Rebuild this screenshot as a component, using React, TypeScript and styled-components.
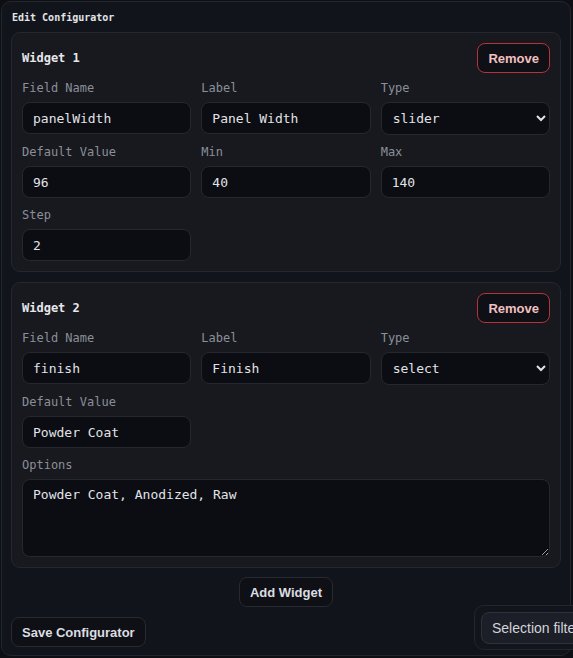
import styled, { createGlobalStyle } from 'styled-components'

const Global = createGlobalStyle`
  html, body {
    margin: 0;
    padding: 0;
    background: #0d0f14;
    color-scheme: dark;
  }
  * {
    box-sizing: border-box;
  }
`

const mono = `"DejaVu Sans Mono", "Liberation Mono", monospace`
const sans = `"Liberation Sans", Arial, sans-serif`

const Page = styled.div`
  position: relative;
  width: 573px;
  height: 658px;
  padding: 1px 2px 2px 1px;
  overflow: hidden;
`

const Panel = styled.div`
  height: 100%;
  background: #12141b;
  border: 1px solid #23262d;
  border-radius: 10px;
  padding: 9px 9px 0 9px;
  display: flex;
  flex-direction: column;
`

const Title = styled.h1`
  margin: 0 0 7px 1px;
  font-family: ${mono};
  font-size: 10px;
  line-height: 14px;
  font-weight: bold;
  color: #e2e4e8;
`

const Cards = styled.div`
  display: flex;
  flex-direction: column;
  gap: 10px;
`

const Card = styled.section`
  background: #18191f;
  border: 1px solid #25272e;
  border-radius: 9px;
  padding: 10px 10px 10px 10px;
`

const CardHeader = styled.div`
  display: flex;
  align-items: center;
  justify-content: space-between;
  margin-bottom: 8px;
`

const CardTitle = styled.h2`
  margin: 0;
  font-family: ${mono};
  font-size: 12px;
  font-weight: bold;
  color: #e6e7ea;
`

const Button = styled.button<{ $danger?: boolean }>`
  font-family: ${sans};
  font-size: 13px;
  font-weight: bold;
  height: 30px;
  padding: 0 10px;
  border-radius: 8px;
  background: #0e1016;
  color: ${(p) => (p.$danger ? '#f2c0c0' : '#dcdde0')};
  border: 1px solid ${(p) => (p.$danger ? '#b8323a' : '#272a31')};
  cursor: pointer;
`

const Grid = styled.div`
  display: grid;
  grid-template-columns: repeat(3, 1fr);
  column-gap: 10px;
  row-gap: 10px;
`

const Field = styled.label<{ $full?: boolean }>`
  display: flex;
  flex-direction: column;
  gap: 6px;
  grid-column: ${(p) => (p.$full ? '1 / -1' : 'auto')};
`

const FieldLabel = styled.span`
  font-family: ${mono};
  font-size: 12px;
  line-height: 15px;
  color: #8a8f98;
`

const inputBase = `
  width: 100%;
  background: #0b0d13;
  border: 1px solid #262830;
  border-radius: 8px;
  color: #e2e3e6;
  font-family: ${mono};
  font-size: 13px;
  outline: none;
`

const Input = styled.input`
  ${inputBase}
  height: 32px;
  padding: 0 10px;
`

const Select = styled.select`
  ${inputBase}
  height: 33px;
  padding: 0 7px;
`

const TextArea = styled.textarea`
  ${inputBase}
  height: 78px;
  padding: 6px 10px;
  line-height: 17px;
  resize: vertical;
`

const Footer = styled.div`
  display: flex;
  flex-direction: column;
  margin-top: 9px;
  gap: 10px;
`

const Center = styled.div`
  display: flex;
  justify-content: center;
`

const Start = styled.div`
  display: flex;
  justify-content: flex-start;
`

const FilterPopover = styled.div`
  position: absolute;
  left: 474px;
  top: 605px;
  width: 140px;
  height: 45px;
  background: #13151c;
  border: 1px solid #23262d;
  border-radius: 10px;
  padding: 6px;
`

const FilterButton = styled.button`
  height: 32px;
  width: 120px;
  text-align: left;
  padding: 0 10px;
  white-space: nowrap;
  font-family: ${sans};
  font-size: 14px;
  color: #d2d4d8;
  background: #1c1f27;
  border: 1px solid #2e313a;
  border-radius: 8px;
`

type Widget = {
  name: string
  label: string
  type: string
  defaultValue: string
  min?: string
  max?: string
  step?: string
  options?: string
}

const widgets: Widget[] = [
  {
    name: 'panelWidth',
    label: 'Panel Width',
    type: 'slider',
    defaultValue: '96',
    min: '40',
    max: '140',
    step: '2'
  },
  {
    name: 'finish',
    label: 'Finish',
    type: 'select',
    defaultValue: 'Powder Coat',
    options: 'Powder Coat, Anodized, Raw'
  }
]

function WidgetCard({ widget, index }: { widget: Widget; index: number }) {
  return (
    <Card>
      <CardHeader>
        <CardTitle>Widget {index + 1}</CardTitle>
        <Button $danger>Remove</Button>
      </CardHeader>
      <Grid>
        <Field>
          <FieldLabel>Field Name</FieldLabel>
          <Input defaultValue={widget.name} />
        </Field>
        <Field>
          <FieldLabel>Label</FieldLabel>
          <Input defaultValue={widget.label} />
        </Field>
        <Field>
          <FieldLabel>Type</FieldLabel>
          <Select defaultValue={widget.type}>
            <option value="slider">slider</option>
            <option value="select">select</option>
            <option value="toggle">toggle</option>
          </Select>
        </Field>
        <Field>
          <FieldLabel>Default Value</FieldLabel>
          <Input defaultValue={widget.defaultValue} />
        </Field>
        {widget.type === 'slider' && (
          <>
            <Field>
              <FieldLabel>Min</FieldLabel>
              <Input defaultValue={widget.min} />
            </Field>
            <Field>
              <FieldLabel>Max</FieldLabel>
              <Input defaultValue={widget.max} />
            </Field>
            <Field>
              <FieldLabel>Step</FieldLabel>
              <Input defaultValue={widget.step} />
            </Field>
          </>
        )}
        {widget.type === 'select' && (
          <Field $full>
            <FieldLabel>Options</FieldLabel>
            <TextArea defaultValue={widget.options} />
          </Field>
        )}
      </Grid>
    </Card>
  )
}

export default function App() {
  return (
    <Page>
      <Global />
      <Panel>
        <Title>Edit Configurator</Title>
        <Cards>
          {widgets.map((w, i) => (
            <WidgetCard key={w.name} widget={w} index={i} />
          ))}
        </Cards>
        <Footer>
          <Center>
            <Button>Add Widget</Button>
          </Center>
          <Start>
            <Button>Save Configurator</Button>
          </Start>
        </Footer>
      </Panel>
      <FilterPopover>
        <FilterButton>Selection filter</FilterButton>
      </FilterPopover>
    </Page>
  )
}
